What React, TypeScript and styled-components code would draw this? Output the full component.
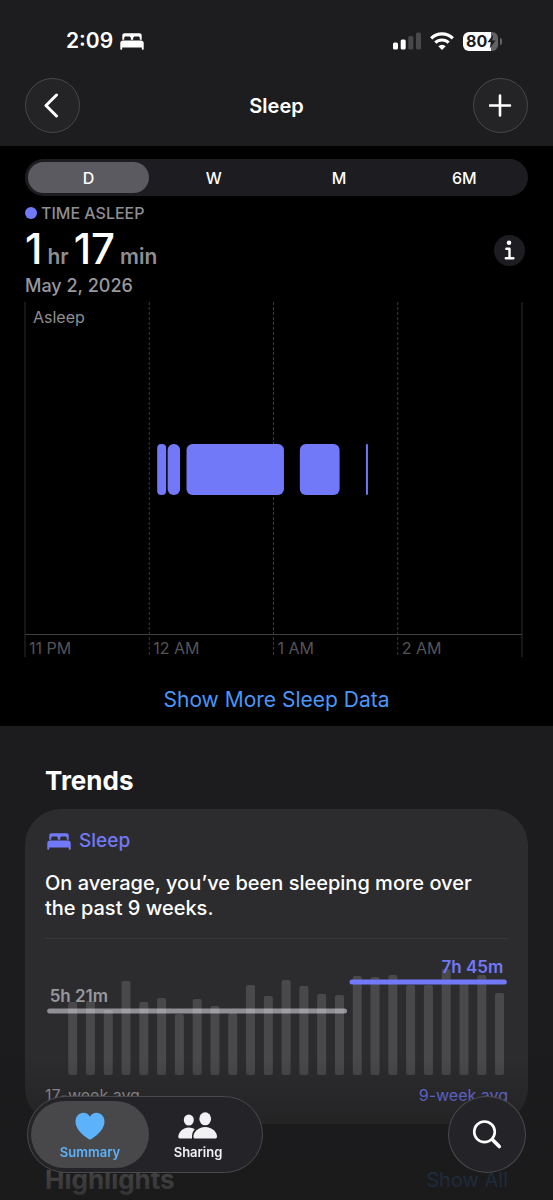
import React, { useState } from "react";
import styled, { createGlobalStyle } from "styled-components";

const GlobalStyle = createGlobalStyle`
  *, *::before, *::after { box-sizing: border-box; }
  body {
    margin: 0;
    background: #1c1c1e;
    color: #fff;
    font-family: Inter, "Liberation Sans", sans-serif;
    -webkit-font-smoothing: antialiased;
  }
  button { font: inherit; color: inherit; border: 0; padding: 0; cursor: pointer; }
  a { color: inherit; text-decoration: none; }
  h1, h2, h3, p { margin: 0; }
`;

const purple = "#7279f8";

const Page = styled.div`
  display: flex;
  flex-direction: column;
  min-height: 100vh;
`;

const Header = styled.header`
  padding: 27px 25px 13px;
  background: #1d1d1f;
`;

const StatusBar = styled.div`
  display: flex;
  align-items: center;
  justify-content: space-between;
  height: 28px;
  padding: 0 30px 0 41px;
`;

const StatusGroup = styled.div<{ $gap: number }>`
  display: flex;
  align-items: center;
  gap: ${(p) => p.$gap}px;
`;

const Clock = styled.time`
  font-size: 21px;
  line-height: 28px;
  font-weight: 600;
`;

const Battery = styled.div`
  position: relative;
  display: flex;
  align-items: center;
  width: 35px;
  height: 19px;
  padding-left: 3px;
  border-radius: 6px;
  background: linear-gradient(90deg, #fff 80%, #636366 80%);
  color: #1d1d1f;
  font-size: 16px;
  line-height: 19px;
  font-weight: 700;

  &::after {
    content: "";
    position: absolute;
    right: -4px;
    top: 6px;
    width: 2px;
    height: 7px;
    border-radius: 0 2px 2px 0;
    background: #636366;
  }
`;

const NavRow = styled.div`
  display: flex;
  align-items: center;
  justify-content: space-between;
  margin-top: 23px;
`;

const NavTitle = styled.h1`
  font-size: 20px;
  line-height: 28px;
  font-weight: 600;
`;

const RoundButton = styled.button`
  display: grid;
  place-items: center;
  width: 55px;
  height: 55px;
  border: 1px solid #48484b;
  border-radius: 50%;
  background: #242426;
`;

const DataSection = styled.section`
  display: flex;
  flex-direction: column;
  padding: 13px 25px 12px;
  background: #000;
`;

const Segmented = styled.div`
  display: grid;
  grid-template-columns: repeat(4, 1fr);
  gap: 4px;
  height: 37px;
  padding: 3px;
  border-radius: 19px;
  background: #1d1c21;
`;

const Segment = styled.button<{ $active: boolean }>`
  border-radius: 16px;
  background: ${(p) => (p.$active ? "#5b5a60" : "transparent")};
  font-size: 16px;
  line-height: 20px;
  font-weight: 500;
`;

const Summary = styled.div`
  display: flex;
  align-items: center;
  justify-content: space-between;
  margin: 7px 3px 0 0;
`;

const MetricLabel = styled.h2`
  display: flex;
  align-items: center;
  gap: 4px;
  color: #8e8e93;
  font-size: 16px;
  line-height: 20px;
  font-weight: 500;

  &::before {
    content: "";
    width: 12px;
    height: 12px;
    border-radius: 50%;
    background: ${purple};
  }
`;

const MetricValue = styled.p`
  display: flex;
  align-items: baseline;
  gap: 5px;
  height: 51px;
  font-size: 42px;
  line-height: 51px;
  font-weight: 500;
`;

const Unit = styled.span`
  color: #8e8e93;
  font-size: 21px;
  font-weight: 600;
`;

const MetricDate = styled.p`
  color: #98989d;
  font-size: 18px;
  line-height: 24px;
  font-weight: 500;
`;

const InfoButton = styled.button`
  display: grid;
  place-items: center;
  width: 31px;
  height: 31px;
  border-radius: 50%;
  background: #1d1c21;
`;

const SleepChart = styled.figure`
  position: relative;
  margin: 4px 6px 0 0;
`;

const SleepPlot = styled.svg`
  display: block;
  width: 100%;
  height: 355px;
  overflow: visible;
`;

const LaneLabel = styled.figcaption`
  position: absolute;
  top: 5px;
  left: 8px;
  color: #8e8e93;
  font-size: 16px;
  line-height: 20px;
`;

const HourAxis = styled.div`
  position: absolute;
  left: 0;
  right: 0;
  bottom: 0;
  display: grid;
  grid-template-columns: repeat(4, 1fr);
  color: #545458;
  font-size: 16px;
  line-height: 18px;

  span { padding-left: 4px; }
`;

const MoreLink = styled.a`
  align-self: center;
  margin-top: 29px;
  color: #4897f8;
  font-size: 21px;
  line-height: 28px;
`;

const TrendsSection = styled.section`
  padding: 39px 25px 4px;
`;

const SectionRow = styled.div<{ $top: number }>`
  display: flex;
  align-items: center;
  justify-content: space-between;
  margin-top: ${(p) => p.$top}px;
  padding: 0 20px;
`;

const SectionTitle = styled.h2`
  font-size: 26px;
  line-height: 32px;
  font-weight: 700;
`;

const SectionLink = styled.a`
  color: #2f86e0;
  font-size: 20px;
  line-height: 28px;
`;

const Card = styled.article`
  margin-top: 12px;
  padding: 20px 20px 19px;
  border-radius: 36px;
  background: #2c2c2e;
`;

const CardTopic = styled.h3`
  display: flex;
  align-items: center;
  gap: 8px;
  padding-left: 2px;
  color: ${purple};
  font-size: 19px;
  line-height: 24px;
  font-weight: 500;
`;

const CardText = styled.p`
  margin-top: 18px;
  padding: 0 24px 17px 0;
  font-size: 20px;
  line-height: 25px;
  font-weight: 500;
`;

const Divider = styled.hr`
  height: 1px;
  margin: 0;
  border: 0;
  background: #38383a;
`;

const TrendPlot = styled.svg`
  display: block;
  width: 100%;
  height: 136px;
  overflow: visible;
  font-size: 17px;
  font-weight: 600;
`;

const AverageRow = styled.div`
  display: flex;
  justify-content: space-between;
  margin-top: 10px;
  color: #a0a0a6;
  font-size: 16px;
  line-height: 20px;
`;

const RecentAverage = styled.span`
  color: ${purple};
`;

const BottomFade = styled.div`
  position: fixed;
  left: 0;
  right: 0;
  bottom: 0;
  height: 140px;
  background: linear-gradient(rgba(27, 27, 28, 0), rgba(27, 27, 28, 0.83) 80%, rgba(27, 27, 28, 0.9));
  pointer-events: none;
`;

const BottomBar = styled.div`
  position: fixed;
  left: 27px;
  right: 27px;
  bottom: 27px;
  display: flex;
  align-items: center;
  justify-content: space-between;
`;

const Tabs = styled.nav`
  display: flex;
  width: 236px;
  height: 77px;
  padding: 4px 3px;
  border: 1px solid #4a4a4d;
  border-radius: 39px;
  background: #242428;
`;

const Tab = styled.a<{ $active?: boolean }>`
  display: flex;
  flex-direction: column;
  align-items: center;
  justify-content: flex-end;
  gap: 3px;
  width: ${(p) => (p.$active ? 118 : 98)}px;
  padding-bottom: 7px;
  border-radius: 34px;
  background: ${(p) => (p.$active ? "#48484b" : "transparent")};
  color: ${(p) => (p.$active ? "#5cb2fb" : "#f2f2f5")};
  font-size: 13px;
  line-height: 18px;
  font-weight: 600;
`;

const SearchButton = styled.button`
  display: grid;
  place-items: center;
  width: 78px;
  height: 77px;
  border: 1px solid #4a4a4d;
  border-radius: 50%;
  background: #242428;
`;

const BedIcon = () => (
  <svg width="24" height="17" viewBox="0 0 24 17" fill="currentColor" aria-hidden="true">
    <path d="M2.3 6.8V2.6C2.3 1.1 3.2.3 4.6.3h14.8c1.4 0 2.3.8 2.3 2.3v4.200h-1.9V5.200c0-1-.6-1.7-1.6-1.7h-3.3c-1 0-1.7.6-1.7 1.600v1.7h-2.4V5.100c0-1-.7-1.6-1.7-1.6H5.800c-1 0-1.6.7-1.6 1.700v1.6z" />
    <path d="M3 7.400h18c1.7 0 2.7 1 2.7 2.7v6c0 .3-.2.6-.6.6h-.7c-.4 0-.6-.3-.6-.6v-1.500H2.200v1.500c0 .3-.2.6-.6.6H.9c-.4 0-.6-.3-.6-.6v-6C.3 8.400 1.300 7.400 3 7.400z" />
  </svg>
);

const SignalIcon = () => (
  <svg width="28" height="18" viewBox="0 0 28 18" aria-hidden="true">
    <rect x="0" y="10.5" width="5" height="7" rx="1.5" fill="#fff" />
    <rect x="7.7" y="7.5" width="5" height="10" rx="1.5" fill="#fff" />
    <rect x="15.3" y="4" width="5" height="13.5" rx="1.5" fill="#48484a" />
    <rect x="23" y="0.5" width="5" height="17" rx="1.5" fill="#48484a" />
  </svg>
);

const WifiIcon = () => (
  <svg width="24" height="18" viewBox="0 0 24 18" aria-hidden="true">
    <g fill="none" stroke="#fff" strokeWidth="3.2">
      <path d="M1.2 6.3a15.4 15.4 0 0 1 21.6 0" />
      <path d="M5.3 10.7a9.6 9.6 0 0 1 13.4 0" />
    </g>
    <path d="M12 17.900l-3.700-3.700a5.300 5.300 0 0 1 7.400 0z" fill="#fff" />
  </svg>
);

const BoltIcon = () => (
  <svg width="9" height="15" viewBox="0 0 9 15" aria-hidden="true">
    <path d="M6.2.5L.5 8.300h3.300L2.700 14.500l5.900-8H5.200z" fill="#1d1d1f" />
  </svg>
);

const HeartIcon = () => (
  <svg width="30" height="28" viewBox="0 0 30 28" fill="currentColor" aria-hidden="true">
    <path d="M15 27.500c-.5 0-1-.3-1.500-.6C6 22 .5 16 .5 9.400.5 4.300 4 .7 8.400.7c2.900 0 5.200 1.500 6.600 4 1.400-2.500 3.700-4 6.600-4 4.400 0 7.900 3.600 7.900 8.700 0 6.600-5.500 12.600-13 17.500-.5.3-1 .6-1.500.6z" />
  </svg>
);

const PeopleIcon = () => (
  <svg width="40" height="28" viewBox="0 0 40 28" fill="currentColor" aria-hidden="true">
    <ellipse cx="10.8" cy="8" rx="5" ry="5.5" />
    <path d="M1.800 26.500c-1 0-1.500-.5-1.500-1.400 0-4.200 4-9.600 10.500-9.600 2.300 0 4.300.7 5.900 1.800-2 2-3 4.900-2.700 9.200z" />
    <ellipse cx="27.200" cy="6.800" rx="5.900" ry="6.500" />
    <path d="M17.400 26.500c-1.300 0-2-.7-2-1.800 0-4.400 4.600-9.700 11.800-9.700S39 20.300 39 24.700c0 1.100-.7 1.800-2 1.800z" />
  </svg>
);

const gridX = ["0%", "25%", "50%", "75%", "100%"];

const asleepBlocks = [
  { x: 26.6, w: 1.8, r: 4 },
  { x: 28.7, w: 2.5, r: 6 },
  { x: 32.5, w: 19.6, r: 6 },
  { x: 55.3, w: 8, r: 6 },
  { x: 68.6, w: 0.4, r: 1 },
];

const weeks = [
  73, 74, 65, 94, 73, 77, 61, 76, 69, 62, 90, 79, 95, 89, 81, 80,
  99, 98, 100, 90, 90, 106, 92, 100, 82,
];

const hours = ["11 PM", "12 AM", "1 AM", "2 AM"];
const ranges = ["D", "W", "M", "6M"];

export default function App() {
  const [range, setRange] = useState("D");

  return (
    <>
      <GlobalStyle />
      <Page>
        <Header>
          <StatusBar>
            <StatusGroup $gap={7}>
              <Clock>2:09</Clock>
              <BedIcon />
            </StatusGroup>
            <StatusGroup $gap={9}>
              <SignalIcon />
              <WifiIcon />
              <Battery>
                80
                <BoltIcon />
              </Battery>
            </StatusGroup>
          </StatusBar>
          <NavRow>
            <RoundButton aria-label="Back">
              <svg width="17" height="25" viewBox="0 0 17 25" fill="none" stroke="#fff" strokeWidth="3" strokeLinecap="round" strokeLinejoin="round">
                <path d="M12.500 2L2 12.500 12.500 23" />
              </svg>
            </RoundButton>
            <NavTitle>Sleep</NavTitle>
            <RoundButton aria-label="Add data">
              <svg width="23" height="23" viewBox="0 0 23 23" stroke="#fff" strokeWidth="2.6" strokeLinecap="round">
                <path d="M11 1.500v20M1 11.500h20" />
              </svg>
            </RoundButton>
          </NavRow>
        </Header>

        <DataSection>
          <Segmented role="group" aria-label="Range">
            {ranges.map((r) => (
              <Segment key={r} $active={r === range} aria-pressed={r === range} onClick={() => setRange(r)}>
                {r}
              </Segment>
            ))}
          </Segmented>

          <Summary>
            <div>
              <MetricLabel>TIME ASLEEP</MetricLabel>
              <MetricValue>
                1<Unit>hr</Unit>17<Unit>min</Unit>
              </MetricValue>
              <MetricDate>May 2, 2026</MetricDate>
            </div>
            <InfoButton aria-label="About sleep">
              <svg width="11" height="21" viewBox="0 0 11 21" fill="none" stroke="#fff" strokeWidth="2.4" strokeLinecap="round" strokeLinejoin="round">
                <circle cx="5" cy="2.8" r="2.3" fill="#fff" stroke="none" />
                <path d="M2.300 8.700h3.200v9.600M1.800 18.300h7.600" />
              </svg>
            </InfoButton>
          </Summary>

          <SleepChart>
            <SleepPlot role="img" aria-label="Time asleep between 11 PM and 3 AM">
              {gridX.map((x, i) => {
                const edge = i === 0 || i === gridX.length - 1;
                return (
                  <line
                    key={x}
                    x1={x}
                    x2={x}
                    y1="0"
                    y2="355"
                    stroke={edge ? "#2c2c2e" : "#3a3a3c"}
                    strokeDasharray={edge ? undefined : "3 2"}
                  />
                );
              })}
              <line x1="0%" x2="100%" y1="332.5" y2="332.5" stroke="#3f3f41" />
              {asleepBlocks.map((b) => (
                <rect key={b.x} x={`${b.x}%`} y="142" width={`${b.w}%`} height="51" rx={b.r} fill={purple} />
              ))}
            </SleepPlot>
            <LaneLabel>Asleep</LaneLabel>
            <HourAxis>
              {hours.map((h) => (
                <span key={h}>{h}</span>
              ))}
            </HourAxis>
          </SleepChart>

          <MoreLink href="#more">Show More Sleep Data</MoreLink>
        </DataSection>

        <TrendsSection>
          <SectionRow $top={0}>
            <SectionTitle>Trends</SectionTitle>
          </SectionRow>
          <Card>
            <CardTopic>
              <BedIcon />
              Sleep
            </CardTopic>
            <CardText>On average, you’ve been sleeping more over the past 9 weeks.</CardText>
            <Divider />
            <TrendPlot role="img" aria-label="Weekly sleep averages">
              <line x1="1%" x2="64.7%" y1="72" y2="72" stroke="#8f8f94" strokeWidth="5" strokeLinecap="round" />
              {weeks.map((h, i) => (
                <rect
                  key={i}
                  x={`${5 + i * 3.842}%`}
                  y={136 - h}
                  width="9"
                  height={h}
                  rx="2"
                  fill="#fff"
                  fillOpacity="0.14"
                />
              ))}
              <line x1="66.3%" x2="99.2%" y1="43" y2="43" stroke={purple} strokeWidth="5" strokeLinecap="round" />
              <text x="1%" y="63" fill="#98989d">5h 21m</text>
              <text x="99%" y="34" textAnchor="end" fill={purple}>7h 45m</text>
            </TrendPlot>
            <AverageRow>
              <span>17-week avg</span>
              <RecentAverage>9-week avg</RecentAverage>
            </AverageRow>
          </Card>
          <SectionRow $top={40}>
            <SectionTitle>Highlights</SectionTitle>
            <SectionLink href="#all">Show All</SectionLink>
          </SectionRow>
        </TrendsSection>
      </Page>

      <BottomFade />
      <BottomBar>
        <Tabs aria-label="Main">
          <Tab href="#summary" $active aria-current="page">
            <HeartIcon />
            Summary
          </Tab>
          <Tab href="#sharing">
            <PeopleIcon />
            Sharing
          </Tab>
        </Tabs>
        <SearchButton aria-label="Search">
          <svg width="30" height="31" viewBox="0 0 30 31" fill="none" stroke="#fff" strokeLinecap="round">
            <circle cx="12.5" cy="12.8" r="10.3" strokeWidth="2.6" />
            <path d="M20.300 20.500l7 7" strokeWidth="3.6" />
          </svg>
        </SearchButton>
      </BottomBar>
    </>
  );
}
